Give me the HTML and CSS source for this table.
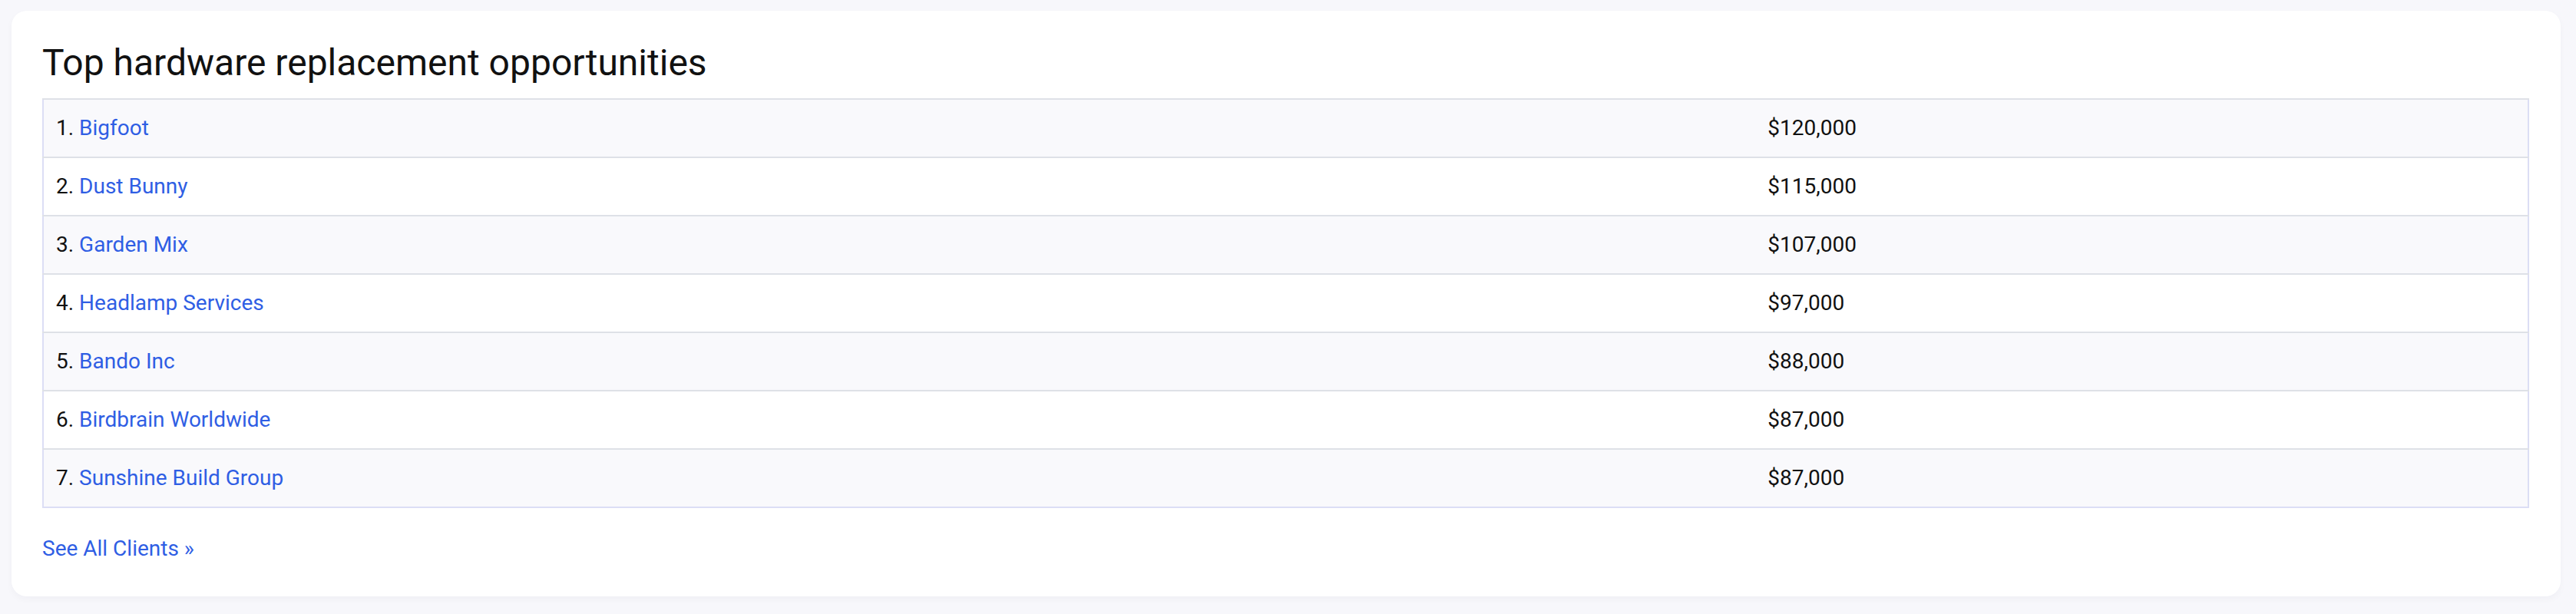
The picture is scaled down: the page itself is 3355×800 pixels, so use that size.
FILE: index.html
```html
<!DOCTYPE html>
<html lang="en">
<head>
    <meta charset="UTF-8">
    <meta name="viewport" content="width=device-width, initial-scale=1.0">
    <title>Top hardware replacement opportunities</title>
    <link rel="stylesheet" href="styles.css">
</head>
<body>
    <div class="panel">
        <h2 class="panel-title">Top hardware replacement opportunities</h2>

        <table class="rank-table">
            <tr>
                <td class="client">1. <a href="#">Bigfoot</a></td>
                <td class="amount">$120,000</td>
            </tr>
            <tr>
                <td class="client">2. <a href="#">Dust Bunny</a></td>
                <td class="amount">$115,000</td>
            </tr>
            <tr>
                <td class="client">3. <a href="#">Garden Mix</a></td>
                <td class="amount">$107,000</td>
            </tr>
            <tr>
                <td class="client">4. <a href="#">Headlamp Services</a></td>
                <td class="amount">$97,000</td>
            </tr>
            <tr>
                <td class="client">5. <a href="#">Bando Inc</a></td>
                <td class="amount">$88,000</td>
            </tr>
            <tr>
                <td class="client">6. <a href="#">Birdbrain Worldwide</a></td>
                <td class="amount">$87,000</td>
            </tr>
            <tr>
                <td class="client">7. <a href="#">Sunshine Build Group</a></td>
                <td class="amount">$87,000</td>
            </tr>
        </table>

        <a class="see-all" href="#">See All Clients &raquo;</a>
    </div>
</body>
</html>
```

FILE: styles.css
```css
body {
    font-family: Roboto, "Liberation Sans", Arial, sans-serif;
    margin: 0;
    padding: 14px 20px 25px 15px;
    background-color: #f7f7fb;
    color: #111;
}

a {
    color: #2f5ee4;
    text-decoration: none;
}

.panel {
    background-color: #fff;
    border-radius: 20px;
    padding: 40px 41px 41px 40px;
    box-shadow: 0 4px 10px rgba(20, 20, 60, 0.03);
}

.panel-title {
    font-size: 48px;
    font-weight: 400;
    line-height: 56px;
    margin: 0 0 18px 0;
}

.rank-table {
    width: 100%;
    border-collapse: collapse;
    border: 2px solid #dcdef5;
    font-size: 28px;
    line-height: 42px;
}

.rank-table td {
    padding: 16px;
    border-top: 2px solid #dee1e7;
}

.rank-table tr:nth-child(odd) {
    background-color: #f9f9fc;
}

.client {
    width: 68.9%;
}

.see-all {
    display: inline-block;
    margin-top: 32px;
    font-size: 28px;
    line-height: 42px;
}
```
